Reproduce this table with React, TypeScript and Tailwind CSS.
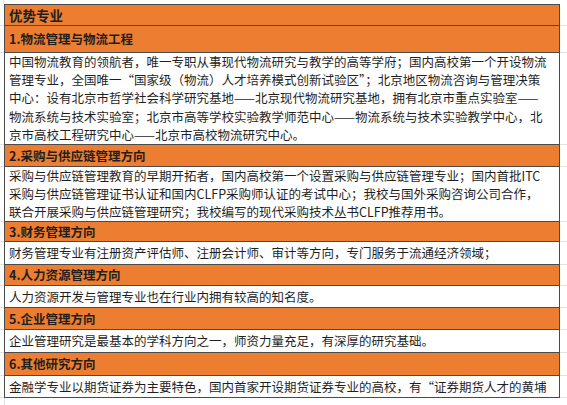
const font = { fontFamily: '"Noto Sans CJK SC", Lato, sans-serif' };

type Row = { kind: "head" | "title" | "body"; h: string; lines: string[] };

const rows: Row[] = [
  { kind: "head", h: "h-[22px]", lines: ["优势专业"] },
  { kind: "title", h: "h-[27px]", lines: ["1.物流管理与物流工程"] },
  {
    kind: "body",
    h: "h-[92px]",
    lines: [
      "中国物流教育的领航者，唯一专职从事现代物流研究与教学的高等学府；国内高校第一个开设物流",
      "管理专业，全国唯一“国家级（物流）人才培养模式创新试验区”；北京地区物流咨询与管理决策",
      "中心：设有北京市哲学社会科学研究基地——北京现代物流研究基地，拥有北京市重点实验室——",
      "物流系统与技术实验室；北京市高等学校实验教学师范中心——物流系统与技术实验教学中心，北",
      "京市高校工程研究中心——北京市高校物流研究中心。",
    ],
  },
  { kind: "title", h: "h-[22px]", lines: ["2.采购与供应链管理方向"] },
  {
    kind: "body",
    h: "h-[55px]",
    lines: [
      "采购与供应链管理教育的早期开拓者，国内高校第一个设置采购与供应链管理专业；国内首批ITC",
      "采购与供应链管理证书认证和国内CLFP采购师认证的考试中心；我校与国外采购咨询公司合作，",
      "联合开展采购与供应链管理研究；我校编写的现代采购技术丛书CLFP推荐用书。",
    ],
  },
  { kind: "title", h: "h-[20px]", lines: ["3.财务管理方向"] },
  { kind: "body", h: "h-[23px]", lines: ["财务管理专业有注册资产评估师、注册会计师、审计等方向，专门服务于流通经济领域；"] },
  { kind: "title", h: "h-[21px]", lines: ["4.人力资源管理方向"] },
  { kind: "body", h: "h-[22px]", lines: ["人力资源开发与管理专业也在行业内拥有较高的知名度。"] },
  { kind: "title", h: "h-[22px]", lines: ["5.企业管理方向"] },
  { kind: "body", h: "h-[23px]", lines: ["企业管理研究是最基本的学科方向之一，师资力量充足，有深厚的研究基础。"] },
  { kind: "title", h: "h-[23px]", lines: ["6.其他研究方向"] },
  {
    kind: "body",
    h: "h-[22px]",
    lines: ["金融学专业以期货证券为主要特色，国内首家开设期货证券专业的高校，有“证券期货人才的黄埔"],
  },
];

function Cell({ row, first }: { row: Row; first: boolean }) {
  const orange = row.kind !== "body";
  const size = row.kind === "head" ? "text-[13.5px]" : "text-[12.5px]";
  const lead = row.lines.length > 3 ? "leading-[18.2px]" : "leading-[18px]";
  return (
    <div
      className={`w-[556px] shrink-0 border-x border-b border-[#4a4a4a] pl-[4px] ${row.h} ${
        first ? "border-t" : ""
      } ${orange ? "flex items-center bg-[#ed7d31] font-bold" : "flex flex-col justify-center bg-white"}`}
    >
      {row.lines.map((l, i) => (
        <div key={i} className={`whitespace-nowrap text-[#1f1f1f] ${size} ${lead}`}>
          {l}
        </div>
      ))}
    </div>
  );
}

export default function App() {
  return (
    <div className="h-[405px] w-[567px] overflow-hidden bg-white" style={font}>
      <div className="flex h-[4px]">
        <div className="w-[4px] border-r border-[#e2e2e2]" />
        <div className="flex-1" />
      </div>
      {rows.map((r, i) => (
        <div key={i} className="flex">
          <div className="w-[4px] shrink-0 border-b border-[#e2e2e2]" />
          <Cell row={r} first={i === 0} />
          <div className="flex-1 border-b border-[#e2e2e2]" />
        </div>
      ))}
      <div className="flex h-[10px]">
        <div className="w-[5px] border-r border-[#e2e2e2]" />
        <div className="flex-1" />
      </div>
    </div>
  );
}
